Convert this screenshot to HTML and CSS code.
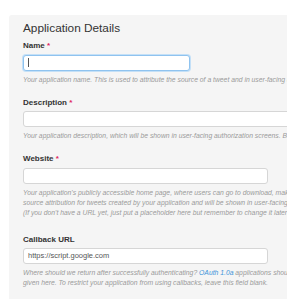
FILE: index.html
```html
<!DOCTYPE html>
<html lang="en">
<head>
  <meta charset="UTF-8" />
  <meta name="viewport" content="width=device-width, initial-scale=1.0"/>
  <title>Application Details</title>
  <link rel="stylesheet" href="styles.css">
</head>
<body>
  <div class="panel">
    <h2>Application Details</h2>

    <div class="field">
      <label>Name <span class="req">*</span></label>
      <div class="input input-name focused"><span class="caret"></span></div>
      <p class="help">Your application name. This is used to attribute the source of a tweet and in user-facing authorization screens. 32 characters max.</p>
    </div>

    <div class="field">
      <label>Description <span class="req">*</span></label>
      <div class="input input-wide"></div>
      <p class="help">Your application description, which will be shown in user-facing authorization screens. Between 10 and 200 characters max.</p>
    </div>

    <div class="field">
      <label>Website <span class="req">*</span></label>
      <div class="input"></div>
      <p class="help">Your application's publicly accessible home page, where users can go to download, make use of, or find out more information about your application.<br>source attribution for tweets created by your application and will be shown in user-facing authorization screens.<br>(If you don't have a URL yet, just put a placeholder here but remember to change it later.)</p>
    </div>

    <div class="field field-last">
      <label>Callback URL</label>
      <div class="input">https://script.google.com</div>
      <p class="help">Where should we return after successfully authenticating? <a href="#">OAuth 1.0a</a> applications should explicitly specify their oauth_callback URL on the request token step.<br>given here. To restrict your application from using callbacks, leave this field blank.</p>
    </div>
  </div>
</body>
</html>
```

FILE: styles.css
```css
* {
  margin: 0;
  padding: 0;
  box-sizing: border-box;
}

body {
  font-family: "Liberation Sans", Arial, sans-serif;
  background: #ffffff;
  overflow: hidden;
  padding: 15px 0 0 9px;
}

.panel {
  width: 600px;
  min-height: 400px;
  background-color: #f5f5f5;
  border-radius: 3px;
  padding: 5px 14px 0;
}

h2 {
  font-size: 11.8px;
  font-weight: normal;
  color: #333333;
  line-height: 17px;
  margin-bottom: 4px;
}

.field {
  margin-bottom: 13px;
}

.field-last {
  margin-top: 17px;
}

label {
  display: block;
  font-size: 8px;
  font-weight: bold;
  color: #333333;
  line-height: 10px;
  margin-bottom: 3.5px;
}

.req {
  color: #e0245e;
}

.input {
  width: 245px;
  height: 16px;
  background-color: #ffffff;
  border: 1px solid #d6d6d6;
  border-radius: 3px;
  font-size: 7.5px;
  color: #555555;
  line-height: 14px;
  padding-left: 4px;
}

.input-name {
  width: 167px;
}

.input-wide {
  width: 420px;
}

.focused {
  border-color: #8fc3ef;
  box-shadow: 0 0 0 1px #c4e0f7;
}

.caret {
  display: inline-block;
  width: 1px;
  height: 9px;
  background: #555555;
  vertical-align: -2px;
}

.help {
  font-size: 6.8px;
  font-style: italic;
  color: #9a9a9a;
  line-height: 10px;
  margin-top: 4px;
  white-space: nowrap;
}

.help a {
  color: #3b94d9;
  text-decoration: none;
}
```
